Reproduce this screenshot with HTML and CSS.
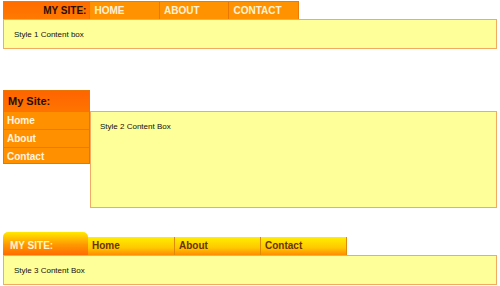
FILE: index.html
```html
<!DOCTYPE html>
<html>
<head>
    <title>Menu Styles</title>
    <link rel="stylesheet" href="styles.css">
</head>
<body>
    <div class="style1">
        <div class="nav1">
            <span class="brand1">MY SITE:</span>
            <a href="#">HOME</a>
            <a href="#">ABOUT</a>
            <a href="#">CONTACT</a>
        </div>
        <div class="box box1">Style 1 Content box</div>
    </div>

    <div class="style2">
        <div class="nav2">
            <div class="brand2">My Site:</div>
            <a href="#">Home</a>
            <a href="#">About</a>
            <a href="#">Contact</a>
        </div>
        <div class="box box2">Style 2 Content Box</div>
    </div>

    <div class="style3">
        <div class="nav3">
            <span class="brand3">MY SITE:</span>
            <a href="#" class="first">Home</a>
            <a href="#">About</a>
            <a href="#">Contact</a>
        </div>
        <div class="box box3">Style 3 Content Box</div>
    </div>
</body>
</html>
```

FILE: styles.css
```css
body {
    font-family: Arial, "Liberation Sans", sans-serif;
    margin: 0;
    padding: 1px 3px 0 3px;
    background-color: #fff;
}
a {
    text-decoration: none;
}
.box {
    box-sizing: border-box;
    background-color: #ffff99;
    border: 1px solid #f2ab62;
    font-size: 8px;
    color: #111;
}

/* style 1 */
.nav1 {
    display: flex;
    width: 296px;
    height: 18px;
    box-sizing: border-box;
    border: 1px solid #ee7a00;
    border-bottom: none;
    background-color: #ff9200;
}
.brand1 {
    width: 86px;
    box-sizing: border-box;
    padding-right: 3px;
    text-align: right;
    background: linear-gradient(#ff6c00, #ff7a00);
    color: #2a0d00;
    font-weight: bold;
    font-size: 10px;
    line-height: 17px;
}
.nav1 a {
    width: 70px;
    box-sizing: border-box;
    border-left: 1px solid #e87800;
    padding-left: 4px;
    color: #fff3d6;
    font-weight: bold;
    font-size: 10px;
    line-height: 17px;
}
.box1 {
    height: 30px;
    padding: 10px 0 0 10px;
}

/* style 2 */
.style2 {
    display: flex;
    margin-top: 41px;
}
.nav2 {
    width: 87px;
    height: 74px;
    display: flex;
    flex-direction: column;
    box-sizing: border-box;
    border: 1px solid #ee7400;
    background-color: #ff9000;
}
.brand2 {
    height: 20px;
    padding-left: 4px;
    background: linear-gradient(#ff6400, #ff7400);
    color: #2a0d00;
    font-weight: bold;
    font-size: 11px;
    line-height: 20px;
}
.nav2 a {
    height: 17px;
    padding-left: 3px;
    border-top: 1px solid #f07a00;
    color: #fff6e0;
    font-weight: bold;
    font-size: 10px;
    line-height: 17px;
}
.box2 {
    flex: 1;
    height: 97px;
    margin-top: 21px;
    padding: 10px 0 0 9px;
}

/* style 3 */
.style3 {
    margin-top: 24px;
}
.nav3 {
    display: flex;
    align-items: flex-end;
    height: 23px;
}
.brand3 {
    width: 85px;
    height: 23px;
    box-sizing: border-box;
    padding: 8px 0 0 7px;
    border-radius: 5px 5px 0 0;
    background: linear-gradient(#ffea00, #ff9800 55%, #ff6c00);
    color: #fff6c8;
    font-weight: bold;
    font-size: 10px;
}
.nav3 a {
    width: 86px;
    height: 18px;
    box-sizing: border-box;
    padding: 3px 0 0 4px;
    border-right: 1px solid #e08a00;
    background: linear-gradient(#ffee00, #ffc800 60%, #ff8c00);
    color: #6a3300;
    font-weight: bold;
    font-size: 10px;
}
.nav3 a.first {
    width: 87px;
}
.box3 {
    height: 30px;
    padding: 10px 0 0 10px;
}
```
